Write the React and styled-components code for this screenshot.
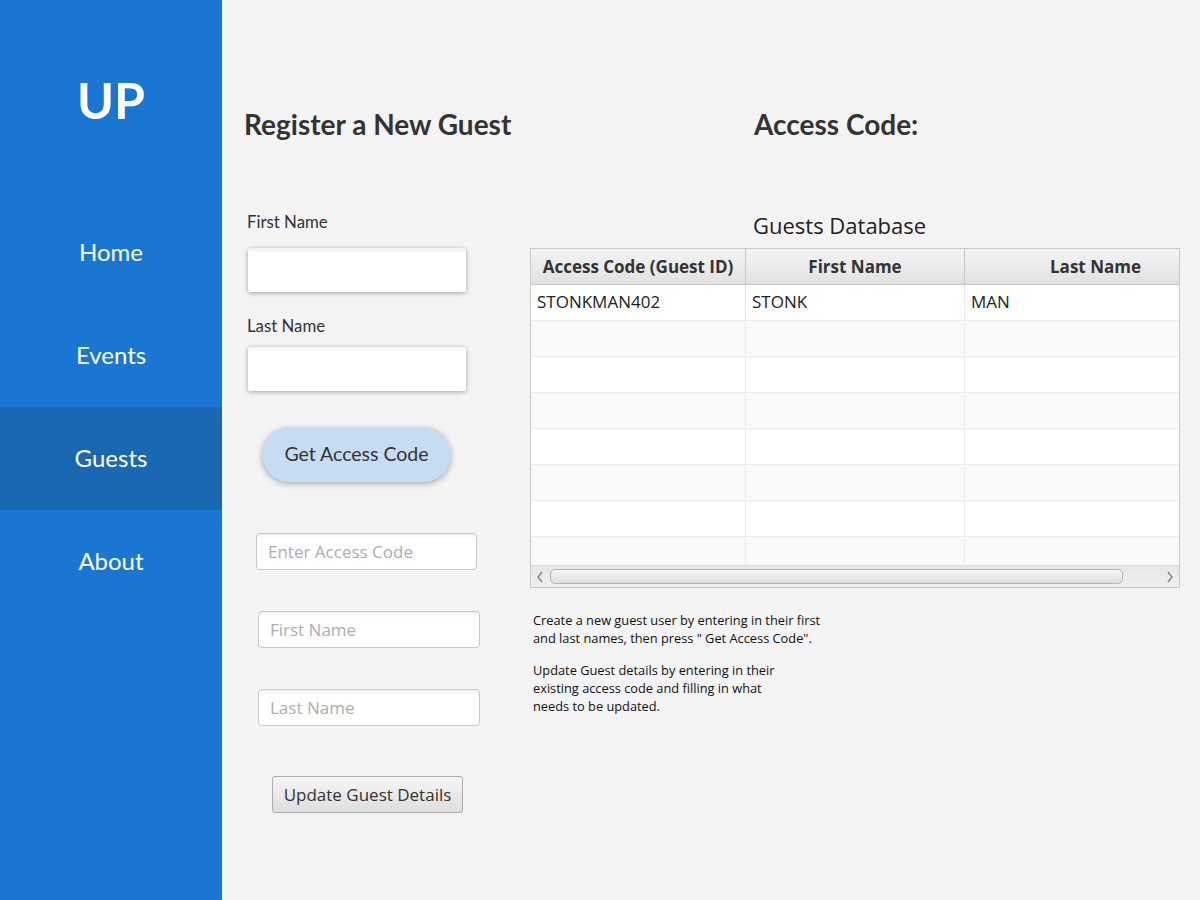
import React from 'react';
import styled, { createGlobalStyle } from 'styled-components';

const GlobalStyle = createGlobalStyle`
  body {
    margin: 0;
    overflow: hidden;
    font-family: Lato, "Liberation Sans", sans-serif;
  }
`;

const Page = styled.div`
  display: flex;
  width: 1200px;
  height: 900px;
`;

const Sidebar = styled.nav`
  width: 222px;
  flex-shrink: 0;
  background-color: #1976d2;
  display: flex;
  flex-direction: column;
`;

const Logo = styled.div`
  height: 201px;
  padding-top: 72px;
  box-sizing: border-box;
  text-align: center;
  color: white;
  font-family: Lato, sans-serif;
  font-weight: 700;
  font-size: 50px;
  line-height: 56px;
`;

const NavItem = styled.div`
  height: 103px;
  display: flex;
  align-items: center;
  justify-content: center;
  padding-bottom: 2px;
  box-sizing: border-box;
  color: white;
  font-family: Lato, sans-serif;
  font-size: 24px;
  background-color: ${(p) => (p.$active ? '#1a67b2' : 'transparent')};
`;

const Main = styled.main`
  flex: 1;
  background-color: #f4f4f4;
  display: flex;
  padding-top: 108px;
  padding-left: 22px;
`;

const LeftColumn = styled.div`
  width: 286px;
  display: flex;
  flex-direction: column;
  align-items: flex-start;
`;

const RightColumn = styled.div`
  width: 650px;
  display: flex;
  flex-direction: column;
`;

const Heading = styled.h1`
  margin: 0;
  margin-left: ${(p) => p.$indent || 0}px;
  font-family: Lato, sans-serif;
  font-weight: 700;
  font-size: 28px;
  line-height: 32px;
  color: #333333;
`;

const FieldLabel = styled.label`
  margin-left: 3px;
  margin-top: ${(p) => p.$top}px;
  font-family: Lato, sans-serif;
  font-size: 16.8px;
  line-height: 20px;
  color: #333333;
`;

const RaisedInput = styled.input`
  margin-left: 4px;
  margin-top: ${(p) => p.$top}px;
  width: 218px;
  height: 44px;
  box-sizing: border-box;
  border: none;
  border-radius: 3px;
  background: linear-gradient(#f3f3f3, #ffffff 6px);
  box-shadow: 0 1px 5px rgba(0, 0, 0, 0.35);
  outline: none;
`;

const PillButton = styled.button`
  margin-left: 18px;
  margin-top: 36px;
  width: 189px;
  height: 55px;
  border: none;
  border-radius: 28px;
  background-color: #c5dcf3;
  box-shadow: 0 2px 6px rgba(0, 0, 0, 0.3);
  font-family: Lato, sans-serif;
  font-size: 19.5px;
  color: #333333;
  padding: 0 0 2px;
`;

const FlatInput = styled.input`
  margin-left: ${(p) => p.$left}px;
  margin-top: ${(p) => p.$top}px;
  width: ${(p) => p.$width}px;
  height: 37px;
  box-sizing: border-box;
  border: 1px solid #c8c8c8;
  border-radius: 4px;
  background: linear-gradient(#f2f2f2, #ffffff 5px);
  padding: 0 11px;
  font-family: "Open Sans", sans-serif;
  font-size: 17px;
  color: #333;
  outline: none;

  &::placeholder {
    color: #aeaeae;
  }
`;

const GrayButton = styled.button`
  margin-left: 28px;
  margin-top: 50px;
  width: 191px;
  height: 37px;
  border: 1px solid #adadad;
  border-radius: 3px;
  background: linear-gradient(#f6f6f6, #dedede);
  font-family: "Open Sans", sans-serif;
  font-size: 17px;
  color: #333333;
  padding: 0;
`;

const TableTitle = styled.div`
  margin-top: 71px;
  margin-left: 223px;
  font-family: "Open Sans", sans-serif;
  font-size: 22px;
  line-height: 28px;
  color: #222;
`;

const Table = styled.div`
  margin-top: 9px;
  width: 650px;
  height: 340px;
  box-sizing: border-box;
  border: 1px solid #c8c8c8;
  display: flex;
  flex-direction: column;
  overflow: hidden;
  background: white;
`;

const Row = styled.div`
  display: grid;
  grid-template-columns: 215px 219px 262px;
  height: 36px;
  flex-shrink: 0;
  background-color: ${(p) => (p.$odd ? '#f9f9f9' : '#ffffff')};
  border-bottom: 1px solid #ececec;
  box-sizing: border-box;
`;

const HeaderRow = styled(Row)`
  height: 36px;
  background: linear-gradient(#f4f4f4, #e1e1e1);
  border-bottom: 1px solid #c8c8c8;
`;

const HeaderCell = styled.div`
  display: flex;
  align-items: center;
  justify-content: center;
  border-right: 1px solid #c8c8c8;
  font-family: "Open Sans", sans-serif;
  font-weight: 700;
  font-size: 17px;
  color: #333333;
  white-space: nowrap;
`;

const Cell = styled.div`
  display: flex;
  align-items: center;
  padding-left: 6px;
  padding-bottom: 3px;
  border-right: 1px solid #ececec;
  font-family: "Open Sans", sans-serif;
  font-size: 17px;
  color: #222;
  white-space: nowrap;
`;

const Body = styled.div`
  flex: 1;
  overflow: hidden;
`;

const ScrollBar = styled.div`
  height: 21px;
  flex-shrink: 0;
  background: linear-gradient(#e6e6e6, #f0f0f0);
  display: flex;
  align-items: center;
  padding: 0 4px;
  gap: 5px;
  border-top: 1px solid #e0e0e0;
`;

const Thumb = styled.div`
  width: 573px;
  height: 15px;
  box-sizing: border-box;
  border: 1px solid #b4b4b4;
  border-radius: 5px;
  background: linear-gradient(#f6f6f6, #dcdcdc);
`;

const Arrow = styled.svg`
  width: 10px;
  height: 14px;
  margin-left: ${(p) => (p.$right ? 'auto' : '0')};
`;

const HelpText = styled.p`
  margin: ${(p) => p.$top}px 0 0 3px;
  font-family: "Open Sans", sans-serif;
  font-size: 12.8px;
  line-height: 18px;
  color: #111;
`;

const rows = [
  ['STONKMAN402', 'STONK', 'MAN'],
  ['', '', ''],
  ['', '', ''],
  ['', '', ''],
  ['', '', ''],
  ['', '', ''],
  ['', '', ''],
  ['', '', ''],
];

const App = () => {
  return (
    <>
      <GlobalStyle />
      <Page>
        <Sidebar>
          <Logo>UP</Logo>
          <NavItem>Home</NavItem>
          <NavItem>Events</NavItem>
          <NavItem $active>Guests</NavItem>
          <NavItem>About</NavItem>
        </Sidebar>
        <Main>
          <LeftColumn>
            <Heading>Register a New Guest</Heading>
            <FieldLabel $top={72}>First Name</FieldLabel>
            <RaisedInput $top={16} />
            <FieldLabel $top={24}>Last Name</FieldLabel>
            <RaisedInput $top={11} />
            <PillButton>Get Access Code</PillButton>
            <FlatInput $left={12} $top={51} $width={221} placeholder="Enter Access Code" />
            <FlatInput $left={14} $top={41} $width={222} placeholder="First Name" />
            <FlatInput $left={14} $top={41} $width={222} placeholder="Last Name" />
            <GrayButton>Update Guest Details</GrayButton>
          </LeftColumn>
          <RightColumn>
            <Heading $indent={224}>Access Code:</Heading>
            <TableTitle>Guests Database</TableTitle>
            <Table>
              <HeaderRow>
                <HeaderCell>Access Code (Guest ID)</HeaderCell>
                <HeaderCell>First Name</HeaderCell>
                <HeaderCell>Last Name</HeaderCell>
              </HeaderRow>
              <Body>
                {rows.map((r, i) => (
                  <Row key={i} $odd={i % 2 === 1}>
                    {r.map((c, j) => (
                      <Cell key={j}>{c}</Cell>
                    ))}
                  </Row>
                ))}
              </Body>
              <ScrollBar>
                <Arrow viewBox="0 0 10 14">
                  <path d="M7 2 L3 7 L7 12" fill="none" stroke="#808080" strokeWidth="1.4" />
                </Arrow>
                <Thumb />
                <Arrow $right viewBox="0 0 10 14">
                  <path d="M3 2 L7 7 L3 12" fill="none" stroke="#808080" strokeWidth="1.4" />
                </Arrow>
              </ScrollBar>
            </Table>
            <HelpText $top={23}>
              Create a new guest user by entering in their first
              <br />
              and last names, then press " Get Access Code".
            </HelpText>
            <HelpText $top={14}>
              Update Guest details by entering in their
              <br />
              existing access code and filling in what
              <br />
              needs to be updated.
            </HelpText>
          </RightColumn>
        </Main>
      </Page>
    </>
  );
};

export default App;
